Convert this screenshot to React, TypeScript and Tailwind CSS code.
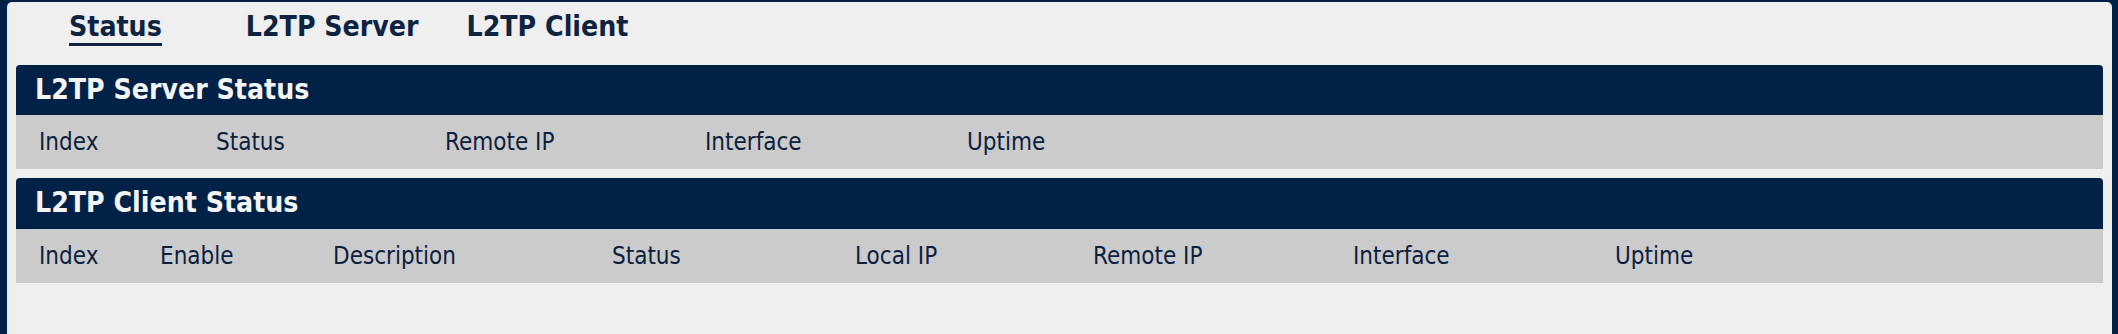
import React from "react";

const FONT = { fontFamily: '"DejaVu Sans Condensed", "DejaVu Sans", Tahoma, sans-serif' };

function Row({ cols }: { cols: { label: string; w: string }[] }) {
  return (
    <div className="flex h-[54px] items-center bg-[#cbcbcb] pl-[23px] text-[24px] text-[#0c203f]">
      {cols.map((c) => (
        <div key={c.label} className={`${c.w} shrink-0 whitespace-nowrap`}>
          {c.label}
        </div>
      ))}
    </div>
  );
}

export default function App() {
  const serverCols = [
    { label: "Index", w: "w-[177px]" },
    { label: "Status", w: "w-[229px]" },
    { label: "Remote IP", w: "w-[260px]" },
    { label: "Interface", w: "w-[262px]" },
    { label: "Uptime", w: "w-[200px]" },
  ];
  const clientCols = [
    { label: "Index", w: "w-[121px]" },
    { label: "Enable", w: "w-[173px]" },
    { label: "Description", w: "w-[279px]" },
    { label: "Status", w: "w-[243px]" },
    { label: "Local IP", w: "w-[238px]" },
    { label: "Remote IP", w: "w-[260px]" },
    { label: "Interface", w: "w-[262px]" },
    { label: "Uptime", w: "w-[200px]" },
  ];
  return (
    <div style={FONT} className="h-[334px] w-full overflow-hidden bg-[#012246] pl-[7px] pr-[6px] pt-[2px]">
      <div className="h-full rounded-t-[5px] bg-[#eeefee] px-[9px]">
        <div className="flex h-[63px] items-start pt-[9px] text-[28.2px] font-bold leading-[32px] text-[#0e2341]">
          <span className="ml-[53px] border-b-[3px] border-[#0e2341]">Status</span>
          <span className="ml-[84px]">L2TP Server</span>
          <span className="ml-[48px]">L2TP Client</span>
        </div>
        <div className="flex h-[50px] items-center rounded-t-[4px] bg-[#012246] pl-[19px] text-[28.2px] font-bold text-[#f4f4f4]">
          L2TP Server Status
        </div>
        <Row cols={serverCols} />
        <div className="mt-[9px] flex h-[51px] items-center rounded-t-[4px] bg-[#012246] pl-[19px] text-[28.2px] font-bold text-[#f4f4f4]">
          L2TP Client Status
        </div>
        <Row cols={clientCols} />
      </div>
    </div>
  );
}
